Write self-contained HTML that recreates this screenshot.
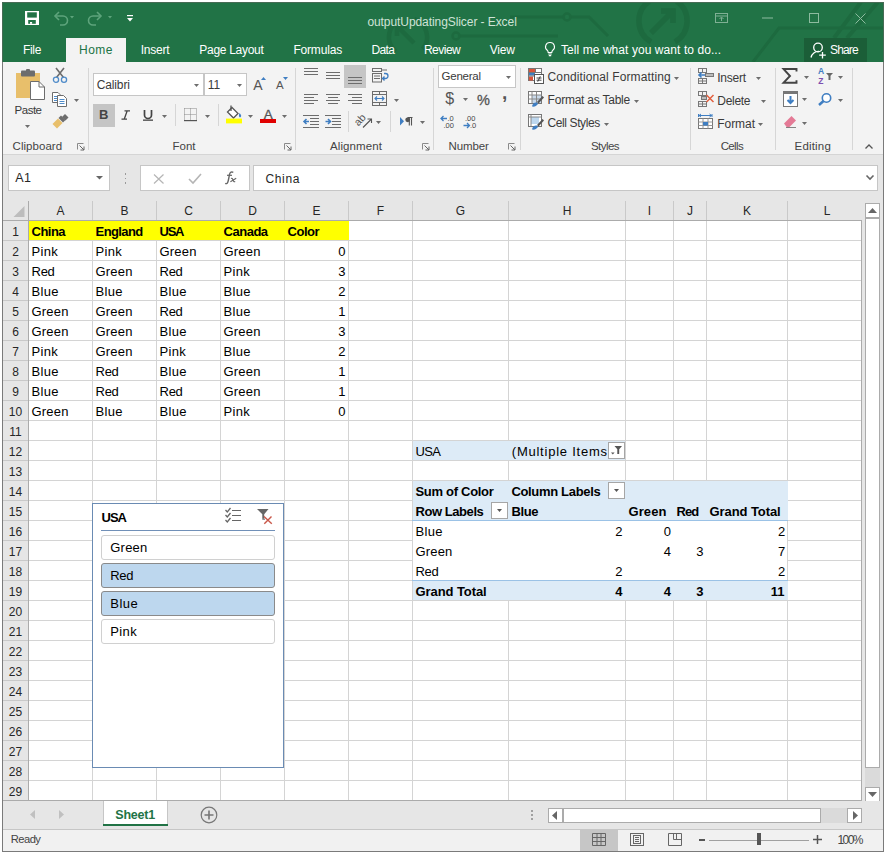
<!DOCTYPE html>
<html><head><meta charset="utf-8">
<style>
*{margin:0;padding:0;box-sizing:border-box}
html,body{width:885px;height:855px;overflow:hidden;background:#fff;font-family:"Liberation Sans",sans-serif;color:#000;position:relative}
.a{position:absolute}
.t{position:absolute;white-space:nowrap}
svg{overflow:visible}
</style></head><body>
<div class="a" style="left:2px;top:2px;width:882px;height:850px;background:#e6e6e6;border:1px solid #7a7a7a;"></div>
<div class="a" style="left:3px;top:3px;width:880px;height:59px;background:#217346;"></div>
<div class="a" style="left:2px;top:2px;width:882px;height:1px;background:#476b55;"></div>
<div class="a" style="left:2px;top:2px;width:1px;height:60px;background:#476b55;"></div>
<div class="a" style="left:883px;top:2px;width:1px;height:60px;background:#476b55;"></div>
<svg class="a" style="left:3px;top:3px;overflow:hidden;" width="880" height="59" viewBox="0 0 880 59"><g stroke="#1d6a3f" fill="none" transform="translate(-3,-3)">
<path d="M510 17 H563 M571 17 H589 L608 36" stroke-width="3"/>
<circle cx="567" cy="17" r="3.5" stroke-width="2.5"/>
<path d="M460 36 H558" stroke-width="3"/>
<circle cx="456" cy="36" r="3.5" stroke-width="2.5"/>
<path d="M395.8 51.6 A19 19 0 0 1 401.5 19.1 M414.5 19.1 A19 19 0 0 1 422.6 49.2" stroke-width="4.5"/>
<path d="M397 26 L414 43 M397 26 V36 M397 26 H407" stroke-width="4.5"/>
<path d="M651.0 41.8 A24 24 0 0 1 649.2 1.3 M676.8 1.3 A24 24 0 0 1 675.0 41.8" stroke-width="5.5"/>
<path d="M651 33 L673 11 M661 11 H673 V23" stroke-width="5.5"/>
<path d="M753 62 L779 28 H884" stroke-width="3"/>
<path d="M834 38 L861 2 M847 38 L878 2" stroke-width="4"/>
</g></svg>
<svg class="a" style="left:25px;top:11px;" width="14" height="14" viewBox="0 0 14 14"><rect x="0" y="0" width="14" height="14" fill="#fff"/><rect x="2.2" y="1.3" width="9.6" height="5.3" fill="#217346"/><rect x="3.2" y="9" width="7.6" height="3.8" fill="#217346"/><rect x="5" y="11" width="2.1" height="1.8" fill="#fff"/></svg>
<svg class="a" style="left:53px;top:10px;" width="30" height="16" viewBox="0 0 30 16"><path d="M3 6 H10 A4.5 4.5 0 0 1 10 15 H7" fill="none" stroke="#5ea47c" stroke-width="1.6"/><path d="M6 2 L2 6 L6 10" fill="none" stroke="#5ea47c" stroke-width="1.6"/><path d="M17 6 L21 6 L19 8.5 Z" fill="#5ea47c"/></svg>
<svg class="a" style="left:87px;top:10px;" width="30" height="16" viewBox="0 0 30 16"><path d="M13 6 H6 A4.5 4.5 0 0 0 6 15 H9" fill="none" stroke="#5ea47c" stroke-width="1.6"/><path d="M10 2 L14 6 L10 10" fill="none" stroke="#5ea47c" stroke-width="1.6"/><path d="M21 6 L25 6 L23 8.5 Z" fill="#5ea47c"/></svg>
<svg class="a" style="left:126px;top:14px;" width="8" height="10" viewBox="0 0 8 10"><rect x="1" y="1" width="6" height="1.2" fill="#fff"/><path d="M1 4 L7 4 L4 7.5 Z" fill="#fff"/></svg>
<div class="t" style="left:367.40px;top:16.14px;font-size:12px;line-height:12px;color:#cfe2d6;letter-spacing:-0.074px;">outputUpdatingSlicer - Excel</div>
<svg class="a" style="left:715px;top:13px;" width="13" height="10" viewBox="0 0 13 10"><rect x="0.5" y="0.5" width="12" height="9" fill="none" stroke="#7fb094"/><path d="M0.5 3 H12.5" stroke="#7fb094"/><path d="M6.5 8 V4.5 M4.5 6 L6.5 4 L8.5 6" stroke="#7fb094" fill="none"/></svg>
<svg class="a" style="left:762px;top:17px;" width="11" height="2" viewBox="0 0 11 2"><rect x="0" y="0.5" width="11" height="1" fill="#8dbb9f"/></svg>
<svg class="a" style="left:809px;top:13px;" width="10" height="10" viewBox="0 0 10 10"><rect x="0.5" y="0.5" width="9" height="9" fill="none" stroke="#8dbb9f"/></svg>
<svg class="a" style="left:855px;top:13px;" width="11" height="11" viewBox="0 0 11 11"><path d="M0.5 0.5 L10.5 10.5 M10.5 0.5 L0.5 10.5" stroke="#8dbb9f" stroke-width="1"/></svg>
<div class="a" style="left:66px;top:38px;width:60px;height:24px;background:#f3f3f3;"></div>
<div class="t" style="left:23.00px;top:44.34px;font-size:12px;line-height:12px;color:#fff;letter-spacing:-0.315px;">File</div>
<div class="t" style="left:79.00px;top:44.34px;font-size:12px;line-height:12px;color:#217346;letter-spacing:0.495px;">Home</div>
<div class="t" style="left:140.70px;top:44.34px;font-size:12px;line-height:12px;color:#fff;letter-spacing:-0.240px;">Insert</div>
<div class="t" style="left:199.30px;top:44.34px;font-size:12px;line-height:12px;color:#fff;letter-spacing:-0.296px;">Page Layout</div>
<div class="t" style="left:293.40px;top:44.34px;font-size:12px;line-height:12px;color:#fff;letter-spacing:-0.174px;">Formulas</div>
<div class="t" style="left:371.50px;top:44.34px;font-size:12px;line-height:12px;color:#fff;letter-spacing:-0.615px;">Data</div>
<div class="t" style="left:423.90px;top:44.34px;font-size:12px;line-height:12px;color:#fff;letter-spacing:-0.492px;">Review</div>
<div class="t" style="left:489.70px;top:44.34px;font-size:12px;line-height:12px;color:#fff;letter-spacing:-0.166px;">View</div>
<svg class="a" style="left:544px;top:41px;" width="12" height="16" viewBox="0 0 12 16"><path d="M6 1.5 A4.3 4.3 0 0 0 3.2 9.2 C4 10 4.2 10.8 4.2 11.5 H7.8 C7.8 10.8 8 10 8.8 9.2 A4.3 4.3 0 0 0 6 1.5 Z" fill="none" stroke="#fff" stroke-width="1.1"/><path d="M4.3 13 H7.7 M4.8 14.6 H7.2" stroke="#fff" stroke-width="1.1"/></svg>
<div class="t" style="left:561.00px;top:44.34px;font-size:12px;line-height:12px;color:#fff;letter-spacing:0.068px;">Tell me what you want to do...</div>
<div class="a" style="left:804px;top:38px;width:63px;height:24px;background:#1b5e38;"></div>
<svg class="a" style="left:810px;top:42px;" width="18" height="17" viewBox="0 0 18 17"><circle cx="8" cy="5.5" r="4.3" fill="none" stroke="#fff" stroke-width="1.3"/><path d="M1 15.5 A7.5 7.5 0 0 1 9 9.5" fill="none" stroke="#fff" stroke-width="1.3"/><path d="M12.5 10 V16.5 M9.2 13.2 H15.8" stroke="#fff" stroke-width="1.3"/></svg>
<div class="t" style="left:830.00px;top:44.34px;font-size:12px;line-height:12px;color:#fff;letter-spacing:-0.854px;">Share</div>
<div class="a" style="left:3px;top:62px;width:880px;height:92px;background:#f3f3f3;"></div>
<div class="a" style="left:3px;top:154px;width:880px;height:1px;background:#d5d5d5;"></div>
<svg class="a" style="left:15px;top:69px;" width="30" height="32" viewBox="0 0 30 32"><rect x="1" y="4" width="24" height="25" fill="#e8bf6b"/><rect x="6" y="1.5" width="14" height="6" rx="1" fill="#6d6d6d"/><rect x="11" y="0" width="4" height="3" rx="1" fill="#6d6d6d"/><path d="M15.5 12.5 H24 L29.5 18 V30.5 H15.5 Z" fill="#fff" stroke="#6d6d6d"/><path d="M24 12.5 V18 H29.5" fill="none" stroke="#6d6d6d"/></svg>
<div class="t" style="left:14.60px;top:105.06px;font-size:11.5px;line-height:11.5px;color:#3a3a3a;letter-spacing:-0.498px;">Paste</div>
<svg class="a" style="left:25px;top:125px;" width="5" height="3" viewBox="0 0 5 3"><path d="M0 0 H5 L2.5 3 Z" fill="#6d6d6d"/></svg>
<svg class="a" style="left:52px;top:67px;" width="16" height="17" viewBox="0 0 16 17"><path d="M4 1 L11.5 10.5 M12 1 L4.5 10.5" stroke="#6d6d6d" stroke-width="1.6"/><circle cx="4" cy="12.8" r="2.6" fill="none" stroke="#4f8bc9" stroke-width="1.3"/><circle cx="12" cy="12.8" r="2.6" fill="none" stroke="#4f8bc9" stroke-width="1.3"/></svg>
<svg class="a" style="left:52px;top:92px;" width="16" height="15" viewBox="0 0 16 15"><path d="M0.5 0.5 H6 L8 2.5 V10.5 H0.5 Z" fill="#fff" stroke="#6d6d6d"/><path d="M2 4.5 H5 M2 6.5 H5 M2 8.5 H5" stroke="#4f8bc9" stroke-width="1"/><path d="M5.5 3.5 H11.5 L14.5 6.5 V14.5 H5.5 Z" fill="#fff" stroke="#6d6d6d"/><path d="M7.5 7.5 H12.5 M7.5 9.5 H12.5 M7.5 11.5 H12.5" stroke="#4f8bc9" stroke-width="1"/></svg>
<svg class="a" style="left:74px;top:98.5px;" width="5" height="3" viewBox="0 0 5 3"><path d="M0 0 H5 L2.5 3 Z" fill="#6d6d6d"/></svg>
<svg class="a" style="left:52px;top:114px;" width="17" height="15" viewBox="0 0 17 15"><path d="M0.5 10 L6 4.5 L10.5 9 L5 14.5 Z" fill="#e8bf6b"/><path d="M6.5 4 L9 1.5 L13.5 6 L11 8.5 Z" fill="#6d6d6d"/><path d="M10 3 L13 0 L16.5 3.5 L13.5 6.5 Z" fill="#6d6d6d"/></svg>
<div class="t" style="left:12.60px;top:141.26px;font-size:11.5px;line-height:11.5px;color:#444;letter-spacing:0.035px;">Clipboard</div>
<svg class="a" style="left:77px;top:143px;" width="8" height="8" viewBox="0 0 8 8"><path d="M0.5 6.5 V0.5 H6.5" fill="none" stroke="#8a8a8a"/><path d="M2.5 2.5 L7 7 M7 3.5 V7 H3.5" fill="none" stroke="#666"/></svg>
<div class="a" style="left:88px;top:68px;width:1px;height:82px;background:#d6d6d6;"></div>
<div class="a" style="left:93px;top:73px;width:111px;height:23px;background:#fff;border:1px solid #c6c6c6;"></div>
<div class="t" style="left:96.70px;top:78.84px;font-size:12px;line-height:12px;color:#3a3a3a;letter-spacing:-0.122px;">Calibri</div>
<svg class="a" style="left:194px;top:84px;" width="5" height="3" viewBox="0 0 5 3"><path d="M0 0 H5 L2.5 3 Z" fill="#6d6d6d"/></svg>
<div class="a" style="left:204px;top:73px;width:43px;height:23px;background:#fff;border:1px solid #c6c6c6;"></div>
<div class="t" style="left:207.70px;top:78.84px;font-size:12px;line-height:12px;color:#3a3a3a;">11</div>
<svg class="a" style="left:237px;top:84px;" width="5" height="3" viewBox="0 0 5 3"><path d="M0 0 H5 L2.5 3 Z" fill="#6d6d6d"/></svg>
<div class="t" style="left:253.20px;top:78.15px;font-size:14px;line-height:14px;color:#555;">A</div>
<svg class="a" style="left:261px;top:76.5px;" width="5" height="3" viewBox="0 0 5 3"><path d="M0 3 H5 L2.5 0 Z" fill="#3f7ec2"/></svg>
<div class="t" style="left:276.00px;top:80.26px;font-size:11.5px;line-height:11.5px;color:#555;">A</div>
<svg class="a" style="left:283px;top:76.5px;" width="5" height="3" viewBox="0 0 5 3"><path d="M0 0 H5 L2.5 3 Z" fill="#3f7ec2"/></svg>
<div class="a" style="left:93px;top:104px;width:22px;height:23px;background:#c5c5c5;"></div>
<div class="t" style="left:99.10px;top:108.19px;font-size:13px;line-height:13px;color:#444;font-weight:bold;">B</div>
<svg class="a" style="left:121px;top:110px;" width="9" height="10" viewBox="0 0 9 10"><path d="M3.5 0.8 H9 M0.5 9.2 H6 M6.2 0.8 L3.2 9.2" fill="none" stroke="#444" stroke-width="1.3"/></svg>
<svg class="a" style="left:143px;top:110px;" width="10" height="11" viewBox="0 0 10 11"><path d="M1.5 0 V5 A3.5 3.5 0 0 0 8.5 5 V0" fill="none" stroke="#444" stroke-width="1.7"/><rect x="0" y="9.5" width="10" height="1.3" fill="#444"/></svg>
<svg class="a" style="left:162px;top:114.5px;" width="5" height="3" viewBox="0 0 5 3"><path d="M0 0 H5 L2.5 3 Z" fill="#6d6d6d"/></svg>
<div class="a" style="left:175px;top:104px;width:1px;height:22px;background:#d6d6d6;"></div>
<svg class="a" style="left:184px;top:108px;" width="13" height="13" viewBox="0 0 13 13"><path d="M0.5 0.5 H12.5 V12.5 M0.5 0.5 V12.5 M6.5 0.5 V12.5 M0.5 6.5 H12.5" fill="none" stroke="#888" stroke-dasharray="1 1"/><rect x="0" y="12" width="13" height="1.2" fill="#555"/></svg>
<svg class="a" style="left:205px;top:114.5px;" width="5" height="3" viewBox="0 0 5 3"><path d="M0 0 H5 L2.5 3 Z" fill="#6d6d6d"/></svg>
<div class="a" style="left:218px;top:104px;width:1px;height:22px;background:#d6d6d6;"></div>
<svg class="a" style="left:225px;top:105px;" width="19" height="19" viewBox="0 0 19 19"><path d="M7 2.5 L13 8.5 L8.5 13 L2.5 7 Z" fill="#fff" stroke="#555" stroke-width="1.3"/><path d="M6 0.5 V6" stroke="#555" stroke-width="1.3"/><path d="M14.5 8 C16.5 10 16.8 11.5 15 12.5 C13.5 11.5 13.8 10 14.5 8 Z" fill="#3f7ec2"/><rect x="1" y="13.6" width="16" height="4.8" fill="#ffff00"/></svg>
<svg class="a" style="left:248px;top:114.5px;" width="5" height="3" viewBox="0 0 5 3"><path d="M0 0 H5 L2.5 3 Z" fill="#6d6d6d"/></svg>
<div class="t" style="left:263.70px;top:107.57px;font-size:13.5px;line-height:13.5px;color:#555;-webkit-text-stroke:0.3px #555;">A</div>
<div class="a" style="left:260px;top:119px;width:16px;height:4px;background:#e00000;"></div>
<svg class="a" style="left:282px;top:114.5px;" width="5" height="3" viewBox="0 0 5 3"><path d="M0 0 H5 L2.5 3 Z" fill="#6d6d6d"/></svg>
<div class="t" style="left:172.50px;top:141.26px;font-size:11.5px;line-height:11.5px;color:#444;">Font</div>
<svg class="a" style="left:284px;top:143px;" width="8" height="8" viewBox="0 0 8 8"><path d="M0.5 6.5 V0.5 H6.5" fill="none" stroke="#8a8a8a"/><path d="M2.5 2.5 L7 7 M7 3.5 V7 H3.5" fill="none" stroke="#666"/></svg>
<div class="a" style="left:295px;top:68px;width:1px;height:82px;background:#d6d6d6;"></div>
<div class="a" style="left:304px;top:68px;width:14px;height:1px;background:#6d6d6d;"></div>
<div class="a" style="left:304px;top:71px;width:14px;height:1px;background:#6d6d6d;"></div>
<div class="a" style="left:304px;top:74px;width:14px;height:1px;background:#6d6d6d;"></div>
<div class="a" style="left:326px;top:72px;width:14px;height:1px;background:#6d6d6d;"></div>
<div class="a" style="left:326px;top:75px;width:14px;height:1px;background:#6d6d6d;"></div>
<div class="a" style="left:326px;top:78px;width:14px;height:1px;background:#6d6d6d;"></div>
<div class="a" style="left:344px;top:65px;width:22px;height:23px;background:#c5c5c5;"></div>
<div class="a" style="left:348px;top:77px;width:14px;height:1px;background:#6d6d6d;"></div>
<div class="a" style="left:348px;top:80px;width:14px;height:1px;background:#6d6d6d;"></div>
<div class="a" style="left:348px;top:83px;width:14px;height:1px;background:#6d6d6d;"></div>
<svg class="a" style="left:372px;top:68px;" width="17" height="15" viewBox="0 0 17 15"><rect x="0.5" y="0.5" width="9" height="3" fill="none" stroke="#6d6d6d"/><path d="M9.5 2 H15" stroke="#6d6d6d"/><rect x="0.5" y="5.5" width="9" height="8.5" fill="none" stroke="#6d6d6d"/><path d="M2 8 H8 M2 10.5 H8" stroke="#6d6d6d"/><path d="M11 10.5 H13.5 A2.5 2.5 0 0 0 13.5 5.5 H12 M12.5 8.5 L10.5 10.5 L12.5 12.5" fill="none" stroke="#3f7ec2" stroke-width="1.3"/></svg>
<div class="a" style="left:304px;top:94px;width:14px;height:1px;background:#6d6d6d;"></div>
<div class="a" style="left:304px;top:97px;width:10px;height:1px;background:#6d6d6d;"></div>
<div class="a" style="left:304px;top:100px;width:14px;height:1px;background:#6d6d6d;"></div>
<div class="a" style="left:304px;top:103px;width:10px;height:1px;background:#6d6d6d;"></div>
<div class="a" style="left:326px;top:94px;width:14px;height:1px;background:#6d6d6d;"></div>
<div class="a" style="left:328px;top:97px;width:10px;height:1px;background:#6d6d6d;"></div>
<div class="a" style="left:326px;top:100px;width:14px;height:1px;background:#6d6d6d;"></div>
<div class="a" style="left:328px;top:103px;width:10px;height:1px;background:#6d6d6d;"></div>
<div class="a" style="left:348px;top:94px;width:14px;height:1px;background:#6d6d6d;"></div>
<div class="a" style="left:352px;top:97px;width:10px;height:1px;background:#6d6d6d;"></div>
<div class="a" style="left:348px;top:100px;width:14px;height:1px;background:#6d6d6d;"></div>
<div class="a" style="left:352px;top:103px;width:10px;height:1px;background:#6d6d6d;"></div>
<svg class="a" style="left:372px;top:91px;" width="16" height="15" viewBox="0 0 16 15"><rect x="0.5" y="0.5" width="14" height="14" fill="none" stroke="#6d6d6d"/><path d="M0.5 3.5 H14.5 M0.5 11.5 H14.5 M7.5 0.5 V3.5 M7.5 11.5 V14.5" stroke="#6d6d6d"/><path d="M3 7.5 H12 M5 5.5 L3 7.5 L5 9.5 M10 5.5 L12 7.5 L10 9.5" fill="none" stroke="#3f7ec2" stroke-width="1.1"/></svg>
<svg class="a" style="left:394px;top:99px;" width="5" height="3" viewBox="0 0 5 3"><path d="M0 0 H5 L2.5 3 Z" fill="#6d6d6d"/></svg>
<svg class="a" style="left:303px;top:115px;" width="17" height="13" viewBox="0 0 17 13"><path d="M0 0.5 H16 M7 3.5 H16 M7 6.5 H16 M7 9.5 H16 M0 12.5 H16" stroke="#6d6d6d"/><path d="M1 6.5 H6 M3.5 4 L1 6.5 L3.5 9" fill="none" stroke="#3f7ec2" stroke-width="1.6"/></svg>
<svg class="a" style="left:325px;top:115px;" width="17" height="13" viewBox="0 0 17 13"><path d="M0 0.5 H16 M7 3.5 H16 M7 6.5 H16 M7 9.5 H16 M0 12.5 H16" stroke="#6d6d6d"/><path d="M0.5 6.5 H5.5 M3 4 L5.5 6.5 L3 9" fill="none" stroke="#3f7ec2" stroke-width="1.6"/></svg>
<div class="a" style="left:348px;top:111px;width:1px;height:21px;background:#d6d6d6;"></div>
<svg class="a" style="left:350px;top:108px;" width="25" height="25" viewBox="0 0 25 25"><text x="0" y="0" font-size="10.5" font-family="Liberation Sans" fill="#555" transform="translate(8.5,18.5) rotate(-48)">ab</text><path d="M13 19.5 L21.5 11 M17.5 11 H21.5 V15" fill="none" stroke="#555" stroke-width="1.1"/></svg>
<svg class="a" style="left:376px;top:121px;" width="5" height="3" viewBox="0 0 5 3"><path d="M0 0 H5 L2.5 3 Z" fill="#6d6d6d"/></svg>
<div class="a" style="left:390px;top:111px;width:1px;height:21px;background:#d6d6d6;"></div>
<svg class="a" style="left:400px;top:117px;" width="13" height="9" viewBox="0 0 13 9"><path d="M0 0 L4 4.2 L0 8.4 Z" fill="#3f7ec2"/><path d="M7.5 0.5 H12.5 M9.3 0.5 V8.5 M11.5 0.5 V8.5" stroke="#555" stroke-width="1.1"/><circle cx="7.7" cy="2.8" r="2.4" fill="#555"/></svg>
<svg class="a" style="left:420px;top:121px;" width="5" height="3" viewBox="0 0 5 3"><path d="M0 0 H5 L2.5 3 Z" fill="#6d6d6d"/></svg>
<div class="t" style="left:330.00px;top:141.26px;font-size:11.5px;line-height:11.5px;color:#444;letter-spacing:0.109px;">Alignment</div>
<svg class="a" style="left:422px;top:143px;" width="8" height="8" viewBox="0 0 8 8"><path d="M0.5 6.5 V0.5 H6.5" fill="none" stroke="#8a8a8a"/><path d="M2.5 2.5 L7 7 M7 3.5 V7 H3.5" fill="none" stroke="#666"/></svg>
<div class="a" style="left:433px;top:68px;width:1px;height:82px;background:#d6d6d6;"></div>
<div class="a" style="left:438px;top:65px;width:78px;height:23px;background:#fff;border:1px solid #c6c6c6;"></div>
<div class="t" style="left:441.50px;top:71.26px;font-size:11.5px;line-height:11.5px;color:#3a3a3a;letter-spacing:-0.232px;">General</div>
<svg class="a" style="left:506px;top:75.5px;" width="5" height="3" viewBox="0 0 5 3"><path d="M0 0 H5 L2.5 3 Z" fill="#6d6d6d"/></svg>
<div class="t" style="left:445.35px;top:90.95px;font-size:16px;line-height:16px;color:#555;font-family:"Liberation Serif",serif;">$</div>
<svg class="a" style="left:463px;top:98px;" width="5" height="3" viewBox="0 0 5 3"><path d="M0 0 H5 L2.5 3 Z" fill="#6d6d6d"/></svg>
<div class="t" style="left:476.95px;top:93.32px;font-size:14.5px;line-height:14.5px;color:#555;-webkit-text-stroke:0.3px #555;">%</div>
<div class="t" style="left:501.96px;top:83.41px;font-size:19px;line-height:19px;color:#555;font-weight:bold;">,</div>
<svg class="a" style="left:440px;top:114px;" width="17" height="15" viewBox="0 0 17 15"><path d="M1 4.5 H7 M3.5 2 L1 4.5 L3.5 7" fill="none" stroke="#3f7ec2" stroke-width="1.3"/><text x="7.5" y="7" font-size="7.5" font-family="Liberation Sans" fill="#444">.0</text><text x="3.5" y="14" font-size="7.5" font-family="Liberation Sans" fill="#444">.00</text></svg>
<svg class="a" style="left:463px;top:114px;" width="15" height="15" viewBox="0 0 15 15"><text x="2" y="7" font-size="7.5" font-family="Liberation Sans" fill="#444">.00</text><path d="M0.5 11.5 H6.5 M4 9 L6.5 11.5 L4 14" fill="none" stroke="#3f7ec2" stroke-width="1.3"/><text x="7" y="14" font-size="7.5" font-family="Liberation Sans" fill="#444">.0</text></svg>
<div class="t" style="left:448.50px;top:141.26px;font-size:11.5px;line-height:11.5px;color:#444;letter-spacing:-0.118px;">Number</div>
<svg class="a" style="left:508px;top:143px;" width="8" height="8" viewBox="0 0 8 8"><path d="M0.5 6.5 V0.5 H6.5" fill="none" stroke="#8a8a8a"/><path d="M2.5 2.5 L7 7 M7 3.5 V7 H3.5" fill="none" stroke="#666"/></svg>
<div class="a" style="left:520px;top:68px;width:1px;height:82px;background:#d6d6d6;"></div>
<svg class="a" style="left:528px;top:68px;" width="16" height="16" viewBox="0 0 16 16"><rect x="0.5" y="0.5" width="13" height="12" fill="#fff" stroke="#777"/><rect x="1" y="1" width="6" height="3" fill="#d9553b"/><rect x="1" y="4.5" width="6" height="3" fill="#3f7ec2"/><rect x="1" y="8.5" width="4" height="4" fill="#d9553b"/><path d="M7.5 0.5 V4.5 M0.5 4.5 H13.5 M0.5 8 H7" stroke="#777"/><rect x="6.5" y="6.5" width="9" height="9" fill="#fff" stroke="#555"/><path d="M8.5 10 H13.5 M8.5 12.2 H13.5 M12.3 8.3 L9.7 13.7" stroke="#333" stroke-width="0.9"/></svg>
<div class="t" style="left:547.60px;top:71.34px;font-size:12px;line-height:12px;color:#3a3a3a;letter-spacing:0.109px;">Conditional Formatting</div>
<svg class="a" style="left:674px;top:76.5px;" width="5" height="3" viewBox="0 0 5 3"><path d="M0 0 H5 L2.5 3 Z" fill="#6d6d6d"/></svg>
<svg class="a" style="left:528px;top:91px;" width="16" height="16" viewBox="0 0 16 16"><rect x="0.5" y="0.5" width="13" height="12" fill="#fff" stroke="#777"/><rect x="4" y="4" width="9" height="8" fill="#c9d9ea"/><path d="M0.5 4 H13.5 M0.5 8 H13.5 M4 0.5 V12.5 M8.5 0.5 V12.5" stroke="#888"/><path d="M9 11 L14.5 5 L16 6.5 L10.5 12.5 Z" fill="#555"/><path d="M4 15.5 C4.5 12.5 6.5 11 9 11.5 L10 13 C8.5 15 6.5 16 4 15.5 Z" fill="#3f7ec2"/></svg>
<div class="t" style="left:547.60px;top:93.84px;font-size:12px;line-height:12px;color:#3a3a3a;letter-spacing:-0.228px;">Format as Table</div>
<svg class="a" style="left:633.5px;top:99.5px;" width="5" height="3" viewBox="0 0 5 3"><path d="M0 0 H5 L2.5 3 Z" fill="#6d6d6d"/></svg>
<svg class="a" style="left:528px;top:114px;" width="16" height="16" viewBox="0 0 16 16"><rect x="0.5" y="0.5" width="13" height="12" fill="#fff" stroke="#777"/><rect x="3" y="3" width="8" height="7" fill="#bdd7ee"/><path d="M0.5 3 H13.5 M3 0.5 V12.5" stroke="#888"/><path d="M9 11 L14.5 5 L16 6.5 L10.5 12.5 Z" fill="#555"/><path d="M4 15.5 C4.5 12.5 6.5 11 9 11.5 L10 13 C8.5 15 6.5 16 4 15.5 Z" fill="#3f7ec2"/></svg>
<div class="t" style="left:547.60px;top:116.84px;font-size:12px;line-height:12px;color:#3a3a3a;letter-spacing:-0.409px;">Cell Styles</div>
<svg class="a" style="left:603.5px;top:122.5px;" width="5" height="3" viewBox="0 0 5 3"><path d="M0 0 H5 L2.5 3 Z" fill="#6d6d6d"/></svg>
<div class="t" style="left:591.00px;top:141.26px;font-size:11.5px;line-height:11.5px;color:#444;letter-spacing:-0.562px;">Styles</div>
<div class="a" style="left:690px;top:68px;width:1px;height:82px;background:#d6d6d6;"></div>
<svg class="a" style="left:698px;top:68px;" width="17" height="16" viewBox="0 0 17 16"><rect x="0.5" y="0.5" width="8" height="4" fill="none" stroke="#777"/><path d="M4.5 0.5 V4.5" stroke="#777"/><rect x="0.5" y="10.5" width="8" height="5" fill="none" stroke="#777"/><path d="M0.5 13 H8.5 M4.5 10.5 V15.5" stroke="#777"/><rect x="7.5" y="5.5" width="8" height="3" fill="#bbb" stroke="#777"/><path d="M1 7 H7 M3.5 4.5 L1 7 L3.5 9.5" fill="none" stroke="#3f7ec2" stroke-width="1.6"/></svg>
<div class="t" style="left:717.30px;top:71.84px;font-size:12px;line-height:12px;color:#3a3a3a;letter-spacing:-0.260px;">Insert</div>
<svg class="a" style="left:756px;top:76.5px;" width="5" height="3" viewBox="0 0 5 3"><path d="M0 0 H5 L2.5 3 Z" fill="#6d6d6d"/></svg>
<svg class="a" style="left:698px;top:91px;" width="17" height="16" viewBox="0 0 17 16"><rect x="0.5" y="0.5" width="8" height="4" fill="none" stroke="#777"/><path d="M4.5 0.5 V4.5" stroke="#777"/><rect x="0.5" y="10.5" width="8" height="5" fill="none" stroke="#777"/><path d="M0.5 13 H8.5 M4.5 10.5 V15.5" stroke="#777"/><rect x="3.5" y="5.5" width="5" height="3" fill="#bbb" stroke="#777"/><path d="M8.5 4 L15.5 11 M15.5 4 L8.5 11" stroke="#e2603f" stroke-width="1.5"/></svg>
<div class="t" style="left:717.30px;top:94.84px;font-size:12px;line-height:12px;color:#3a3a3a;letter-spacing:-0.297px;">Delete</div>
<svg class="a" style="left:760.5px;top:99.5px;" width="5" height="3" viewBox="0 0 5 3"><path d="M0 0 H5 L2.5 3 Z" fill="#6d6d6d"/></svg>
<svg class="a" style="left:698px;top:114px;" width="15" height="16" viewBox="0 0 15 16"><path d="M0.5 0 V3 M14 0 V3 M1 1.5 H13.5 M3 0 L1 1.5 L3 3 M11.5 0 L13.5 1.5 L11.5 3" fill="none" stroke="#3f7ec2"/><rect x="0.5" y="4.5" width="14" height="10" fill="#fff" stroke="#777"/><path d="M0.5 8 H14.5 M0.5 11.5 H14.5 M5 4.5 V14.5 M10 4.5 V14.5" stroke="#999"/><rect x="5" y="8" width="5" height="3.5" fill="#3f7ec2"/></svg>
<div class="t" style="left:717.30px;top:117.84px;font-size:12px;line-height:12px;color:#3a3a3a;letter-spacing:-0.060px;">Format</div>
<svg class="a" style="left:758px;top:122.5px;" width="5" height="3" viewBox="0 0 5 3"><path d="M0 0 H5 L2.5 3 Z" fill="#6d6d6d"/></svg>
<div class="t" style="left:720.70px;top:141.26px;font-size:11.5px;line-height:11.5px;color:#444;letter-spacing:-0.645px;">Cells</div>
<div class="a" style="left:775px;top:68px;width:1px;height:82px;background:#d6d6d6;"></div>
<svg class="a" style="left:782px;top:68px;" width="16" height="16" viewBox="0 0 16 16"><path d="M14.5 3.5 V1 H1.5 L8 8 L1.5 14.8 H14.5 V12.3" fill="none" stroke="#444" stroke-width="1.9" stroke-linejoin="miter"/></svg>
<svg class="a" style="left:804px;top:75.5px;" width="5" height="3" viewBox="0 0 5 3"><path d="M0 0 H5 L2.5 3 Z" fill="#6d6d6d"/></svg>
<div class="t" style="left:818.00px;top:67.40px;font-size:8.5px;line-height:8.5px;color:#3f7ec2;font-weight:bold;">A</div>
<div class="t" style="left:818.20px;top:76.50px;font-size:8.5px;line-height:8.5px;color:#7d4fb0;font-weight:bold;">Z</div>
<svg class="a" style="left:826px;top:73px;" width="7" height="7" viewBox="0 0 7 7"><path d="M0 0 H7 L4.5 2.8 V7 H2.5 V2.8 Z" fill="#666"/></svg>
<svg class="a" style="left:837.5px;top:75.5px;" width="5" height="3" viewBox="0 0 5 3"><path d="M0 0 H5 L2.5 3 Z" fill="#6d6d6d"/></svg>
<svg class="a" style="left:783px;top:91px;" width="15" height="16" viewBox="0 0 15 16"><rect x="0.5" y="0.5" width="14" height="15" fill="#fff" stroke="#777"/><rect x="0" y="0" width="15" height="3" fill="#777"/><path d="M7.5 5 V12 M4.5 9 L7.5 12 L10.5 9" fill="none" stroke="#3f7ec2" stroke-width="2"/></svg>
<svg class="a" style="left:802px;top:98px;" width="5" height="3" viewBox="0 0 5 3"><path d="M0 0 H5 L2.5 3 Z" fill="#6d6d6d"/></svg>
<svg class="a" style="left:818px;top:93px;" width="14" height="13" viewBox="0 0 14 13"><circle cx="8.5" cy="5" r="4.2" fill="#fff" stroke="#3f7ec2" stroke-width="1.6"/><path d="M5.5 8 L1 12" stroke="#3f7ec2" stroke-width="2.4"/></svg>
<svg class="a" style="left:837.5px;top:98.5px;" width="5" height="3" viewBox="0 0 5 3"><path d="M0 0 H5 L2.5 3 Z" fill="#6d6d6d"/></svg>
<svg class="a" style="left:783px;top:115px;" width="14" height="13" viewBox="0 0 14 13"><path d="M1 8.5 L8.5 1 L13 5.5 L6 12.5 H4 Z" fill="#e47a96"/><path d="M3 12.5 H13" stroke="#777" stroke-width="0.9"/></svg>
<svg class="a" style="left:802px;top:121.5px;" width="5" height="3" viewBox="0 0 5 3"><path d="M0 0 H5 L2.5 3 Z" fill="#6d6d6d"/></svg>
<div class="t" style="left:794.60px;top:141.26px;font-size:11.5px;line-height:11.5px;color:#444;letter-spacing:0.174px;">Editing</div>
<div class="a" style="left:852px;top:68px;width:1px;height:82px;background:#d6d6d6;"></div>
<svg class="a" style="left:865px;top:144px;" width="8" height="5" viewBox="0 0 8 5"><path d="M0.5 4.5 L4 1 L7.5 4.5" fill="none" stroke="#555" stroke-width="1.3"/></svg>
<div class="a" style="left:3px;top:155px;width:880px;height:46px;background:#e6e6e6;"></div>
<div class="a" style="left:8px;top:165px;width:102px;height:26px;background:#fff;border:1px solid #c6c6c6;"></div>
<div class="t" style="left:15.30px;top:172.12px;font-size:12.5px;line-height:12.5px;color:#262626;letter-spacing:0.303px;">A1</div>
<svg class="a" style="left:96px;top:175.5px;" width="7" height="4" viewBox="0 0 7 4"><path d="M0 0 H7 L3.5 3.5 Z" fill="#666"/></svg>
<div class="a" style="left:124.5px;top:173px;width:1.5px;height:1.5px;background:#9a9a9a;"></div>
<div class="a" style="left:124.5px;top:177.5px;width:1.5px;height:1.5px;background:#9a9a9a;"></div>
<div class="a" style="left:124.5px;top:182px;width:1.5px;height:1.5px;background:#9a9a9a;"></div>
<div class="a" style="left:140px;top:165px;width:110px;height:26px;background:#fff;border:1px solid #c6c6c6;"></div>
<svg class="a" style="left:153px;top:174px;" width="12" height="10" viewBox="0 0 12 10"><path d="M1 0.5 L10.5 9.5 M10.5 0.5 L1 9.5" stroke="#b5b5b5" stroke-width="1.2"/></svg>
<svg class="a" style="left:188px;top:173px;" width="14" height="11" viewBox="0 0 14 11"><path d="M1 6 L5 10 L13 1" fill="none" stroke="#b5b5b5" stroke-width="1.6"/></svg>
<svg class="a" style="left:224px;top:171px;" width="14" height="14" viewBox="0 0 14 14"><path d="M1.2 12.3 C2.8 13.2 3.8 12 4.3 9.5 L5.6 3.2 C6.1 1.2 7.6 0.6 9.3 1.3" fill="none" stroke="#666" stroke-width="1.4"/><path d="M3 4.3 H8" stroke="#666" stroke-width="1.2"/><path d="M7 7.5 C8 7 8.5 7.5 9 9 C9.5 10.5 10 11 11.2 10.5 M12.2 7.2 L6.4 10.8" fill="none" stroke="#666" stroke-width="1.1"/></svg>
<div class="a" style="left:253px;top:165px;width:625px;height:26px;background:#fff;border:1px solid #c6c6c6;"></div>
<div class="t" style="left:265.40px;top:172.84px;font-size:12px;line-height:12px;color:#262626;letter-spacing:0.660px;">China</div>
<svg class="a" style="left:866px;top:175px;" width="8" height="5" viewBox="0 0 8 5"><path d="M0.5 0.5 L4 4 L7.5 0.5" fill="none" stroke="#666" stroke-width="1.6"/></svg>
<div class="a" style="left:3px;top:201px;width:880px;height:600px;background:#e6e6e6;"></div>
<div class="a" style="left:3px;top:201px;width:858px;height:20px;background:#e6e6e6;"></div>
<div class="a" style="left:3px;top:221px;width:25px;height:580px;background:#e6e6e6;"></div>
<svg class="a" style="left:13px;top:206px;" width="12" height="11" viewBox="0 0 12 11"><path d="M11.5 0 V11 H0.5 Z" fill="#bdbdbd"/></svg>
<div class="a" style="left:29px;top:221px;width:832px;height:580px;background:#fff;"></div>
<div class="t" style="left:56.50px;top:205.04px;font-size:12px;line-height:12px;color:#262626;">A</div>
<div class="a" style="left:92px;top:201px;width:1px;height:20px;background:#c9c9c9;"></div>
<div class="t" style="left:120.50px;top:205.04px;font-size:12px;line-height:12px;color:#262626;">B</div>
<div class="a" style="left:156px;top:201px;width:1px;height:20px;background:#c9c9c9;"></div>
<div class="t" style="left:184.16px;top:205.04px;font-size:12px;line-height:12px;color:#262626;">C</div>
<div class="a" style="left:220px;top:201px;width:1px;height:20px;background:#c9c9c9;"></div>
<div class="t" style="left:248.16px;top:205.04px;font-size:12px;line-height:12px;color:#262626;">D</div>
<div class="a" style="left:284px;top:201px;width:1px;height:20px;background:#c9c9c9;"></div>
<div class="t" style="left:312.50px;top:205.04px;font-size:12px;line-height:12px;color:#262626;">E</div>
<div class="a" style="left:348px;top:201px;width:1px;height:20px;background:#c9c9c9;"></div>
<div class="t" style="left:376.84px;top:205.04px;font-size:12px;line-height:12px;color:#262626;">F</div>
<div class="a" style="left:412px;top:201px;width:1px;height:20px;background:#c9c9c9;"></div>
<div class="t" style="left:455.84px;top:205.04px;font-size:12px;line-height:12px;color:#262626;">G</div>
<div class="a" style="left:508px;top:201px;width:1px;height:20px;background:#c9c9c9;"></div>
<div class="t" style="left:562.66px;top:205.04px;font-size:12px;line-height:12px;color:#262626;">H</div>
<div class="a" style="left:625px;top:201px;width:1px;height:20px;background:#c9c9c9;"></div>
<div class="t" style="left:647.84px;top:205.04px;font-size:12px;line-height:12px;color:#262626;">I</div>
<div class="a" style="left:673px;top:201px;width:1px;height:20px;background:#c9c9c9;"></div>
<div class="t" style="left:687.00px;top:205.04px;font-size:12px;line-height:12px;color:#262626;">J</div>
<div class="a" style="left:706px;top:201px;width:1px;height:20px;background:#c9c9c9;"></div>
<div class="t" style="left:743.00px;top:205.04px;font-size:12px;line-height:12px;color:#262626;">K</div>
<div class="a" style="left:787px;top:201px;width:1px;height:20px;background:#c9c9c9;"></div>
<div class="t" style="left:823.66px;top:205.04px;font-size:12px;line-height:12px;color:#262626;">L</div>
<div class="a" style="left:28px;top:201px;width:1px;height:600px;background:#ababab;"></div>
<div class="a" style="left:3px;top:220px;width:858px;height:1px;background:#ababab;"></div>
<div class="a" style="left:3px;top:240px;width:25px;height:1px;background:#c9c9c9;"></div>
<div class="t" style="left:12.16px;top:225.84px;font-size:12px;line-height:12px;color:#262626;">1</div>
<div class="a" style="left:3px;top:260px;width:25px;height:1px;background:#c9c9c9;"></div>
<div class="t" style="left:12.16px;top:245.84px;font-size:12px;line-height:12px;color:#262626;">2</div>
<div class="a" style="left:3px;top:280px;width:25px;height:1px;background:#c9c9c9;"></div>
<div class="t" style="left:12.16px;top:265.84px;font-size:12px;line-height:12px;color:#262626;">3</div>
<div class="a" style="left:3px;top:300px;width:25px;height:1px;background:#c9c9c9;"></div>
<div class="t" style="left:12.16px;top:285.84px;font-size:12px;line-height:12px;color:#262626;">4</div>
<div class="a" style="left:3px;top:320px;width:25px;height:1px;background:#c9c9c9;"></div>
<div class="t" style="left:12.16px;top:305.84px;font-size:12px;line-height:12px;color:#262626;">5</div>
<div class="a" style="left:3px;top:340px;width:25px;height:1px;background:#c9c9c9;"></div>
<div class="t" style="left:12.16px;top:325.84px;font-size:12px;line-height:12px;color:#262626;">6</div>
<div class="a" style="left:3px;top:360px;width:25px;height:1px;background:#c9c9c9;"></div>
<div class="t" style="left:12.16px;top:345.84px;font-size:12px;line-height:12px;color:#262626;">7</div>
<div class="a" style="left:3px;top:380px;width:25px;height:1px;background:#c9c9c9;"></div>
<div class="t" style="left:12.16px;top:365.84px;font-size:12px;line-height:12px;color:#262626;">8</div>
<div class="a" style="left:3px;top:400px;width:25px;height:1px;background:#c9c9c9;"></div>
<div class="t" style="left:12.16px;top:385.84px;font-size:12px;line-height:12px;color:#262626;">9</div>
<div class="a" style="left:3px;top:420px;width:25px;height:1px;background:#c9c9c9;"></div>
<div class="t" style="left:8.83px;top:405.84px;font-size:12px;line-height:12px;color:#262626;">10</div>
<div class="a" style="left:3px;top:440px;width:25px;height:1px;background:#c9c9c9;"></div>
<div class="t" style="left:9.27px;top:425.84px;font-size:12px;line-height:12px;color:#262626;">11</div>
<div class="a" style="left:3px;top:460px;width:25px;height:1px;background:#c9c9c9;"></div>
<div class="t" style="left:8.83px;top:445.84px;font-size:12px;line-height:12px;color:#262626;">12</div>
<div class="a" style="left:3px;top:480px;width:25px;height:1px;background:#c9c9c9;"></div>
<div class="t" style="left:8.83px;top:465.84px;font-size:12px;line-height:12px;color:#262626;">13</div>
<div class="a" style="left:3px;top:500px;width:25px;height:1px;background:#c9c9c9;"></div>
<div class="t" style="left:8.83px;top:485.84px;font-size:12px;line-height:12px;color:#262626;">14</div>
<div class="a" style="left:3px;top:520px;width:25px;height:1px;background:#c9c9c9;"></div>
<div class="t" style="left:8.83px;top:505.84px;font-size:12px;line-height:12px;color:#262626;">15</div>
<div class="a" style="left:3px;top:540px;width:25px;height:1px;background:#c9c9c9;"></div>
<div class="t" style="left:8.83px;top:525.84px;font-size:12px;line-height:12px;color:#262626;">16</div>
<div class="a" style="left:3px;top:560px;width:25px;height:1px;background:#c9c9c9;"></div>
<div class="t" style="left:8.83px;top:545.84px;font-size:12px;line-height:12px;color:#262626;">17</div>
<div class="a" style="left:3px;top:580px;width:25px;height:1px;background:#c9c9c9;"></div>
<div class="t" style="left:8.83px;top:565.84px;font-size:12px;line-height:12px;color:#262626;">18</div>
<div class="a" style="left:3px;top:600px;width:25px;height:1px;background:#c9c9c9;"></div>
<div class="t" style="left:8.83px;top:585.84px;font-size:12px;line-height:12px;color:#262626;">19</div>
<div class="a" style="left:3px;top:620px;width:25px;height:1px;background:#c9c9c9;"></div>
<div class="t" style="left:8.83px;top:605.84px;font-size:12px;line-height:12px;color:#262626;">20</div>
<div class="a" style="left:3px;top:640px;width:25px;height:1px;background:#c9c9c9;"></div>
<div class="t" style="left:8.83px;top:625.84px;font-size:12px;line-height:12px;color:#262626;">21</div>
<div class="a" style="left:3px;top:660px;width:25px;height:1px;background:#c9c9c9;"></div>
<div class="t" style="left:8.83px;top:645.84px;font-size:12px;line-height:12px;color:#262626;">22</div>
<div class="a" style="left:3px;top:680px;width:25px;height:1px;background:#c9c9c9;"></div>
<div class="t" style="left:8.83px;top:665.84px;font-size:12px;line-height:12px;color:#262626;">23</div>
<div class="a" style="left:3px;top:700px;width:25px;height:1px;background:#c9c9c9;"></div>
<div class="t" style="left:8.83px;top:685.84px;font-size:12px;line-height:12px;color:#262626;">24</div>
<div class="a" style="left:3px;top:720px;width:25px;height:1px;background:#c9c9c9;"></div>
<div class="t" style="left:8.83px;top:705.84px;font-size:12px;line-height:12px;color:#262626;">25</div>
<div class="a" style="left:3px;top:740px;width:25px;height:1px;background:#c9c9c9;"></div>
<div class="t" style="left:8.83px;top:725.84px;font-size:12px;line-height:12px;color:#262626;">26</div>
<div class="a" style="left:3px;top:760px;width:25px;height:1px;background:#c9c9c9;"></div>
<div class="t" style="left:8.83px;top:745.84px;font-size:12px;line-height:12px;color:#262626;">27</div>
<div class="a" style="left:3px;top:780px;width:25px;height:1px;background:#c9c9c9;"></div>
<div class="t" style="left:8.83px;top:765.84px;font-size:12px;line-height:12px;color:#262626;">28</div>
<div class="a" style="left:3px;top:800px;width:25px;height:1px;background:#c9c9c9;"></div>
<div class="t" style="left:8.83px;top:785.84px;font-size:12px;line-height:12px;color:#262626;">29</div>
<div class="a" style="left:92px;top:221px;width:1px;height:580px;background:#d4d4d4;"></div>
<div class="a" style="left:156px;top:221px;width:1px;height:580px;background:#d4d4d4;"></div>
<div class="a" style="left:220px;top:221px;width:1px;height:580px;background:#d4d4d4;"></div>
<div class="a" style="left:284px;top:221px;width:1px;height:580px;background:#d4d4d4;"></div>
<div class="a" style="left:348px;top:221px;width:1px;height:580px;background:#d4d4d4;"></div>
<div class="a" style="left:412px;top:221px;width:1px;height:580px;background:#d4d4d4;"></div>
<div class="a" style="left:508px;top:221px;width:1px;height:580px;background:#d4d4d4;"></div>
<div class="a" style="left:625px;top:221px;width:1px;height:580px;background:#d4d4d4;"></div>
<div class="a" style="left:673px;top:221px;width:1px;height:580px;background:#d4d4d4;"></div>
<div class="a" style="left:706px;top:221px;width:1px;height:580px;background:#d4d4d4;"></div>
<div class="a" style="left:787px;top:221px;width:1px;height:580px;background:#d4d4d4;"></div>
<div class="a" style="left:29px;top:240px;width:832px;height:1px;background:#d4d4d4;"></div>
<div class="a" style="left:29px;top:260px;width:832px;height:1px;background:#d4d4d4;"></div>
<div class="a" style="left:29px;top:280px;width:832px;height:1px;background:#d4d4d4;"></div>
<div class="a" style="left:29px;top:300px;width:832px;height:1px;background:#d4d4d4;"></div>
<div class="a" style="left:29px;top:320px;width:832px;height:1px;background:#d4d4d4;"></div>
<div class="a" style="left:29px;top:340px;width:832px;height:1px;background:#d4d4d4;"></div>
<div class="a" style="left:29px;top:360px;width:832px;height:1px;background:#d4d4d4;"></div>
<div class="a" style="left:29px;top:380px;width:832px;height:1px;background:#d4d4d4;"></div>
<div class="a" style="left:29px;top:400px;width:832px;height:1px;background:#d4d4d4;"></div>
<div class="a" style="left:29px;top:420px;width:832px;height:1px;background:#d4d4d4;"></div>
<div class="a" style="left:29px;top:440px;width:832px;height:1px;background:#d4d4d4;"></div>
<div class="a" style="left:29px;top:460px;width:832px;height:1px;background:#d4d4d4;"></div>
<div class="a" style="left:29px;top:480px;width:832px;height:1px;background:#d4d4d4;"></div>
<div class="a" style="left:29px;top:500px;width:832px;height:1px;background:#d4d4d4;"></div>
<div class="a" style="left:29px;top:520px;width:832px;height:1px;background:#d4d4d4;"></div>
<div class="a" style="left:29px;top:540px;width:832px;height:1px;background:#d4d4d4;"></div>
<div class="a" style="left:29px;top:560px;width:832px;height:1px;background:#d4d4d4;"></div>
<div class="a" style="left:29px;top:580px;width:832px;height:1px;background:#d4d4d4;"></div>
<div class="a" style="left:29px;top:600px;width:832px;height:1px;background:#d4d4d4;"></div>
<div class="a" style="left:29px;top:620px;width:832px;height:1px;background:#d4d4d4;"></div>
<div class="a" style="left:29px;top:640px;width:832px;height:1px;background:#d4d4d4;"></div>
<div class="a" style="left:29px;top:660px;width:832px;height:1px;background:#d4d4d4;"></div>
<div class="a" style="left:29px;top:680px;width:832px;height:1px;background:#d4d4d4;"></div>
<div class="a" style="left:29px;top:700px;width:832px;height:1px;background:#d4d4d4;"></div>
<div class="a" style="left:29px;top:720px;width:832px;height:1px;background:#d4d4d4;"></div>
<div class="a" style="left:29px;top:740px;width:832px;height:1px;background:#d4d4d4;"></div>
<div class="a" style="left:29px;top:760px;width:832px;height:1px;background:#d4d4d4;"></div>
<div class="a" style="left:29px;top:780px;width:832px;height:1px;background:#d4d4d4;"></div>
<div class="a" style="left:29px;top:800px;width:832px;height:1px;background:#d4d4d4;"></div>
<div class="a" style="left:861px;top:220px;width:1px;height:581px;background:#ababab;"></div>
<div class="a" style="left:3px;top:800px;width:880px;height:1px;background:#ababab;"></div>
<div class="a" style="left:29px;top:221px;width:320px;height:19px;background:#ffff00;"></div>
<div class="t" style="left:31.60px;top:224.99px;font-size:13px;line-height:13px;color:#000;font-weight:bold;letter-spacing:-0.527px;">China</div>
<div class="t" style="left:95.60px;top:224.99px;font-size:13px;line-height:13px;color:#000;font-weight:bold;letter-spacing:-0.611px;">England</div>
<div class="t" style="left:159.60px;top:224.99px;font-size:13px;line-height:13px;color:#000;font-weight:bold;letter-spacing:-1.327px;">USA</div>
<div class="t" style="left:223.60px;top:224.99px;font-size:13px;line-height:13px;color:#000;font-weight:bold;letter-spacing:-0.494px;">Canada</div>
<div class="t" style="left:287.60px;top:224.99px;font-size:13px;line-height:13px;color:#000;font-weight:bold;letter-spacing:-0.484px;">Color</div>
<div class="t" style="left:31.60px;top:244.99px;font-size:13px;line-height:13px;color:#000;letter-spacing:0.301px;">Pink</div>
<div class="t" style="left:95.60px;top:244.99px;font-size:13px;line-height:13px;color:#000;letter-spacing:0.301px;">Pink</div>
<div class="t" style="left:159.60px;top:244.99px;font-size:13px;line-height:13px;color:#000;letter-spacing:0.165px;">Green</div>
<div class="t" style="left:223.60px;top:244.99px;font-size:13px;line-height:13px;color:#000;letter-spacing:0.165px;">Green</div>
<div class="t" style="left:338.37px;top:244.99px;font-size:13px;line-height:13px;color:#000;">0</div>
<div class="t" style="left:31.60px;top:264.99px;font-size:13px;line-height:13px;color:#000;letter-spacing:-0.330px;">Red</div>
<div class="t" style="left:95.60px;top:264.99px;font-size:13px;line-height:13px;color:#000;letter-spacing:0.165px;">Green</div>
<div class="t" style="left:159.60px;top:264.99px;font-size:13px;line-height:13px;color:#000;letter-spacing:-0.330px;">Red</div>
<div class="t" style="left:223.60px;top:264.99px;font-size:13px;line-height:13px;color:#000;letter-spacing:0.301px;">Pink</div>
<div class="t" style="left:338.37px;top:264.99px;font-size:13px;line-height:13px;color:#000;">3</div>
<div class="t" style="left:31.60px;top:284.99px;font-size:13px;line-height:13px;color:#000;letter-spacing:0.323px;">Blue</div>
<div class="t" style="left:95.60px;top:284.99px;font-size:13px;line-height:13px;color:#000;letter-spacing:0.323px;">Blue</div>
<div class="t" style="left:159.60px;top:284.99px;font-size:13px;line-height:13px;color:#000;letter-spacing:0.323px;">Blue</div>
<div class="t" style="left:223.60px;top:284.99px;font-size:13px;line-height:13px;color:#000;letter-spacing:0.323px;">Blue</div>
<div class="t" style="left:338.37px;top:284.99px;font-size:13px;line-height:13px;color:#000;">2</div>
<div class="t" style="left:31.60px;top:304.99px;font-size:13px;line-height:13px;color:#000;letter-spacing:0.165px;">Green</div>
<div class="t" style="left:95.60px;top:304.99px;font-size:13px;line-height:13px;color:#000;letter-spacing:0.165px;">Green</div>
<div class="t" style="left:159.60px;top:304.99px;font-size:13px;line-height:13px;color:#000;letter-spacing:-0.330px;">Red</div>
<div class="t" style="left:223.60px;top:304.99px;font-size:13px;line-height:13px;color:#000;letter-spacing:0.323px;">Blue</div>
<div class="t" style="left:338.37px;top:304.99px;font-size:13px;line-height:13px;color:#000;">1</div>
<div class="t" style="left:31.60px;top:324.99px;font-size:13px;line-height:13px;color:#000;letter-spacing:0.165px;">Green</div>
<div class="t" style="left:95.60px;top:324.99px;font-size:13px;line-height:13px;color:#000;letter-spacing:0.165px;">Green</div>
<div class="t" style="left:159.60px;top:324.99px;font-size:13px;line-height:13px;color:#000;letter-spacing:0.323px;">Blue</div>
<div class="t" style="left:223.60px;top:324.99px;font-size:13px;line-height:13px;color:#000;letter-spacing:0.165px;">Green</div>
<div class="t" style="left:338.37px;top:324.99px;font-size:13px;line-height:13px;color:#000;">3</div>
<div class="t" style="left:31.60px;top:344.99px;font-size:13px;line-height:13px;color:#000;letter-spacing:0.301px;">Pink</div>
<div class="t" style="left:95.60px;top:344.99px;font-size:13px;line-height:13px;color:#000;letter-spacing:0.165px;">Green</div>
<div class="t" style="left:159.60px;top:344.99px;font-size:13px;line-height:13px;color:#000;letter-spacing:0.301px;">Pink</div>
<div class="t" style="left:223.60px;top:344.99px;font-size:13px;line-height:13px;color:#000;letter-spacing:0.323px;">Blue</div>
<div class="t" style="left:338.37px;top:344.99px;font-size:13px;line-height:13px;color:#000;">2</div>
<div class="t" style="left:31.60px;top:364.99px;font-size:13px;line-height:13px;color:#000;letter-spacing:0.323px;">Blue</div>
<div class="t" style="left:95.60px;top:364.99px;font-size:13px;line-height:13px;color:#000;letter-spacing:-0.330px;">Red</div>
<div class="t" style="left:159.60px;top:364.99px;font-size:13px;line-height:13px;color:#000;letter-spacing:0.323px;">Blue</div>
<div class="t" style="left:223.60px;top:364.99px;font-size:13px;line-height:13px;color:#000;letter-spacing:0.165px;">Green</div>
<div class="t" style="left:338.37px;top:364.99px;font-size:13px;line-height:13px;color:#000;">1</div>
<div class="t" style="left:31.60px;top:384.99px;font-size:13px;line-height:13px;color:#000;letter-spacing:0.323px;">Blue</div>
<div class="t" style="left:95.60px;top:384.99px;font-size:13px;line-height:13px;color:#000;letter-spacing:-0.330px;">Red</div>
<div class="t" style="left:159.60px;top:384.99px;font-size:13px;line-height:13px;color:#000;letter-spacing:-0.330px;">Red</div>
<div class="t" style="left:223.60px;top:384.99px;font-size:13px;line-height:13px;color:#000;letter-spacing:0.165px;">Green</div>
<div class="t" style="left:338.37px;top:384.99px;font-size:13px;line-height:13px;color:#000;">1</div>
<div class="t" style="left:31.60px;top:404.99px;font-size:13px;line-height:13px;color:#000;letter-spacing:0.165px;">Green</div>
<div class="t" style="left:95.60px;top:404.99px;font-size:13px;line-height:13px;color:#000;letter-spacing:0.323px;">Blue</div>
<div class="t" style="left:159.60px;top:404.99px;font-size:13px;line-height:13px;color:#000;letter-spacing:0.323px;">Blue</div>
<div class="t" style="left:223.60px;top:404.99px;font-size:13px;line-height:13px;color:#000;letter-spacing:0.301px;">Pink</div>
<div class="t" style="left:338.37px;top:404.99px;font-size:13px;line-height:13px;color:#000;">0</div>
<div class="a" style="left:413px;top:441px;width:212px;height:19px;background:#ddebf7;"></div>
<div class="t" style="left:415.50px;top:444.99px;font-size:13px;line-height:13px;color:#000;letter-spacing:-0.617px;">USA</div>
<div class="t" style="left:511.80px;top:444.99px;font-size:13px;line-height:13px;color:#000;letter-spacing:0.762px;">(Multiple Items</div>
<div class="a" style="left:608px;top:442px;width:17px;height:17px;background:#fff;border:1px solid #a6a6a6;"></div>
<svg class="a" style="left:609px;top:443px;" width="15" height="15" viewBox="0 0 15 15"><path d="M5.5 3 H13 L10.2 6.3 V11 H8.3 V6.3 Z" fill="#555"/><path d="M2 9.5 H5.6 L3.8 11.5 Z" fill="#555"/></svg>
<div class="a" style="left:413px;top:481px;width:375px;height:39px;background:#ddebf7;"></div>
<div class="t" style="left:415.50px;top:484.99px;font-size:13px;line-height:13px;color:#000;font-weight:bold;letter-spacing:-0.299px;">Sum of Color</div>
<div class="t" style="left:511.40px;top:484.99px;font-size:13px;line-height:13px;color:#000;font-weight:bold;letter-spacing:-0.323px;">Column Labels</div>
<div class="a" style="left:608px;top:482px;width:17px;height:17px;background:#fff;border:1px solid #a6a6a6;"></div>
<svg class="a" style="left:613.5px;top:489px;" width="5" height="3" viewBox="0 0 5 3"><path d="M0 0 H5 L2.5 3 Z" fill="#555"/></svg>
<div class="t" style="left:415.50px;top:504.99px;font-size:13px;line-height:13px;color:#000;font-weight:bold;letter-spacing:-0.437px;">Row Labels</div>
<div class="a" style="left:491px;top:502px;width:17px;height:17px;background:#fff;border:1px solid #a6a6a6;"></div>
<svg class="a" style="left:496.5px;top:509px;" width="5" height="3" viewBox="0 0 5 3"><path d="M0 0 H5 L2.5 3 Z" fill="#555"/></svg>
<div class="t" style="left:511.40px;top:504.99px;font-size:13px;line-height:13px;color:#000;font-weight:bold;letter-spacing:-0.357px;">Blue</div>
<div class="t" style="left:628.50px;top:504.99px;font-size:13px;line-height:13px;color:#000;font-weight:bold;letter-spacing:0.080px;">Green</div>
<div class="t" style="left:676.50px;top:504.99px;font-size:13px;line-height:13px;color:#000;font-weight:bold;letter-spacing:-0.881px;">Red</div>
<div class="t" style="left:709.50px;top:504.99px;font-size:13px;line-height:13px;color:#000;font-weight:bold;letter-spacing:-0.077px;">Grand Total</div>
<div class="a" style="left:412px;top:520px;width:376px;height:1px;background:#9bc2e6;"></div>
<div class="a" style="left:413px;top:521px;width:374px;height:59px;background:#fff;"></div>
<div class="t" style="left:415.50px;top:524.99px;font-size:13px;line-height:13px;color:#000;letter-spacing:0.323px;">Blue</div>
<div class="t" style="left:615.27px;top:524.99px;font-size:13px;line-height:13px;color:#000;">2</div>
<div class="t" style="left:663.77px;top:524.99px;font-size:13px;line-height:13px;color:#000;">0</div>
<div class="t" style="left:777.97px;top:524.99px;font-size:13px;line-height:13px;color:#000;">2</div>
<div class="t" style="left:415.50px;top:544.99px;font-size:13px;line-height:13px;color:#000;letter-spacing:0.165px;">Green</div>
<div class="t" style="left:663.77px;top:544.99px;font-size:13px;line-height:13px;color:#000;">4</div>
<div class="t" style="left:696.27px;top:544.99px;font-size:13px;line-height:13px;color:#000;">3</div>
<div class="t" style="left:777.97px;top:544.99px;font-size:13px;line-height:13px;color:#000;">7</div>
<div class="t" style="left:415.50px;top:564.99px;font-size:13px;line-height:13px;color:#000;letter-spacing:-0.330px;">Red</div>
<div class="t" style="left:615.27px;top:564.99px;font-size:13px;line-height:13px;color:#000;">2</div>
<div class="t" style="left:777.97px;top:564.99px;font-size:13px;line-height:13px;color:#000;">2</div>
<div class="a" style="left:412px;top:580px;width:376px;height:1px;background:#9bc2e6;"></div>
<div class="a" style="left:413px;top:581px;width:375px;height:19px;background:#ddebf7;"></div>
<div class="t" style="left:415.50px;top:584.99px;font-size:13px;line-height:13px;color:#000;font-weight:bold;letter-spacing:-0.077px;">Grand Total</div>
<div class="t" style="left:615.27px;top:584.99px;font-size:13px;line-height:13px;color:#000;font-weight:bold;">4</div>
<div class="t" style="left:663.77px;top:584.99px;font-size:13px;line-height:13px;color:#000;font-weight:bold;">4</div>
<div class="t" style="left:696.27px;top:584.99px;font-size:13px;line-height:13px;color:#000;font-weight:bold;">3</div>
<div class="t" style="left:770.75px;top:584.99px;font-size:13px;line-height:13px;color:#000;font-weight:bold;">11</div>
<div class="a" style="left:92px;top:503px;width:192px;height:265px;background:#fff;border:1px solid #6a8bb3;"></div>
<div class="t" style="left:101.60px;top:511.19px;font-size:13px;line-height:13px;color:#000;font-weight:bold;letter-spacing:-1.077px;">USA</div>
<svg class="a" style="left:224px;top:507px;" width="18" height="17" viewBox="0 0 18 17"><path d="M1.5 3 L3.3 5 L6.5 1 M1.5 8 L3.3 10 L6.5 6 M1.5 13 L3.3 15 L6.5 11" fill="none" stroke="#666" stroke-width="1.3"/><path d="M8 3.5 H17 M8 8.5 H17 M8 13.5 H17" stroke="#666" stroke-width="1.1"/></svg>
<svg class="a" style="left:256px;top:508px;" width="18" height="18" viewBox="0 0 18 18"><path d="M1 1 H12.5 L8.2 6.2 V10.8 H6.3 V6.2 Z" fill="#666"/><path d="M6.3 11.2 H9" stroke="#666" stroke-width="1"/><path d="M8 8.5 L15.8 15.8 M15.5 8.5 L8.3 15.8" stroke="#c9584a" stroke-width="1.4"/></svg>
<div class="a" style="left:101px;top:530px;width:174px;height:1px;background:#7190b8;"></div>
<div class="a" style="left:101px;top:535px;width:174px;height:25px;background:#fff;border:1px solid #d0d0d0;border-radius:3px;"></div>
<div class="t" style="left:110.30px;top:540.69px;font-size:13px;line-height:13px;color:#000;letter-spacing:0.215px;">Green</div>
<div class="a" style="left:101px;top:563px;width:174px;height:25px;background:#bdd7ee;border:1px solid #8a8a8a;border-radius:3px;"></div>
<div class="t" style="left:110.30px;top:568.69px;font-size:13px;line-height:13px;color:#000;letter-spacing:-0.380px;">Red</div>
<div class="a" style="left:101px;top:591px;width:174px;height:25px;background:#bdd7ee;border:1px solid #8a8a8a;border-radius:3px;"></div>
<div class="t" style="left:110.30px;top:596.69px;font-size:13px;line-height:13px;color:#000;letter-spacing:0.456px;">Blue</div>
<div class="a" style="left:101px;top:619px;width:174px;height:25px;background:#fff;border:1px solid #d0d0d0;border-radius:3px;"></div>
<div class="t" style="left:110.30px;top:624.69px;font-size:13px;line-height:13px;color:#000;letter-spacing:0.368px;">Pink</div>
<div class="a" style="left:862px;top:201px;width:21px;height:600px;background:#e6e6e6;"></div>
<div class="a" style="left:865px;top:203px;width:15px;height:15px;background:#fff;border:1px solid #ababab;"></div>
<svg class="a" style="left:868px;top:208px;" width="9" height="5" viewBox="0 0 9 5"><path d="M0 5 L4.5 0 L9 5 Z" fill="#666"/></svg>
<div class="a" style="left:865px;top:218px;width:15px;height:550px;background:#fff;border:1px solid #ababab;"></div>
<div class="a" style="left:865px;top:768px;width:15px;height:19px;background:#dadada;"></div>
<div class="a" style="left:865px;top:787px;width:15px;height:15px;background:#fff;border:1px solid #ababab;"></div>
<svg class="a" style="left:868px;top:792px;" width="9" height="5" viewBox="0 0 9 5"><path d="M0 0 L4.5 5 L9 0 Z" fill="#666"/></svg>
<div class="a" style="left:3px;top:801px;width:880px;height:28px;background:#e6e6e6;"></div>
<svg class="a" style="left:30px;top:810px;" width="5" height="9" viewBox="0 0 5 9"><path d="M5 0 L0 4.5 L5 9 Z" fill="#c0c0c0"/></svg>
<svg class="a" style="left:59px;top:810px;" width="5" height="9" viewBox="0 0 5 9"><path d="M0 0 L5 4.5 L0 9 Z" fill="#c0c0c0"/></svg>
<div class="a" style="left:103px;top:801px;width:65px;height:25px;background:#fff;border:1px solid #c6c6c6;border-top:none;border-bottom:none;"></div>
<div class="a" style="left:103px;top:824px;width:65px;height:2px;background:#217346;"></div>
<div class="t" style="left:115.30px;top:809.42px;font-size:12.5px;line-height:12.5px;color:#217346;font-weight:bold;letter-spacing:-0.240px;">Sheet1</div>
<svg class="a" style="left:200px;top:806px;" width="18" height="18" viewBox="0 0 18 18"><circle cx="9" cy="9" r="7.8" fill="none" stroke="#777" stroke-width="1.2"/><path d="M9 4.5 V13.5 M4.5 9 H13.5" stroke="#777" stroke-width="1.6"/></svg>
<div class="a" style="left:531px;top:810px;width:1.5px;height:1.5px;background:#a0a0a0;"></div>
<div class="a" style="left:531px;top:814px;width:1.5px;height:1.5px;background:#a0a0a0;"></div>
<div class="a" style="left:531px;top:818px;width:1.5px;height:1.5px;background:#a0a0a0;"></div>
<div class="a" style="left:548px;top:808px;width:15px;height:15px;background:#fff;border:1px solid #ababab;"></div>
<svg class="a" style="left:552px;top:811px;" width="5" height="9" viewBox="0 0 5 9"><path d="M5 0 L0 4.5 L5 9 Z" fill="#666"/></svg>
<div class="a" style="left:563px;top:808px;width:258px;height:15px;background:#fff;border:1px solid #ababab;"></div>
<div class="a" style="left:821px;top:808px;width:26px;height:15px;background:#dadada;"></div>
<div class="a" style="left:847px;top:808px;width:15px;height:15px;background:#fff;border:1px solid #ababab;"></div>
<svg class="a" style="left:853px;top:811px;" width="5" height="9" viewBox="0 0 5 9"><path d="M0 0 L5 4.5 L0 9 Z" fill="#666"/></svg>
<div class="a" style="left:3px;top:829px;width:880px;height:1px;background:#c6c6c6;"></div>
<div class="a" style="left:3px;top:830px;width:880px;height:21px;background:#f1f1f1;"></div>
<div class="t" style="left:10.80px;top:834.22px;font-size:11.2px;line-height:11.2px;color:#444;letter-spacing:-0.557px;">Ready</div>
<div class="a" style="left:580px;top:829px;width:38px;height:22px;background:#c6c6c6;"></div>
<svg class="a" style="left:592px;top:833px;" width="14" height="13" viewBox="0 0 14 13"><path d="M0.5 0.5 H13.5 V12.5 H0.5 Z M0.5 4.5 H13.5 M0.5 8.5 H13.5 M5 0.5 V12.5 M9 0.5 V12.5" fill="none" stroke="#666"/></svg>
<svg class="a" style="left:630px;top:833px;" width="14" height="13" viewBox="0 0 14 13"><rect x="0.5" y="0.5" width="13" height="12" fill="none" stroke="#666"/><rect x="3.5" y="2.5" width="7" height="8" fill="none" stroke="#666"/><path d="M5 4.5 H9 M5 6.5 H9 M5 8.5 H9" stroke="#666"/></svg>
<svg class="a" style="left:668px;top:833px;" width="14" height="13" viewBox="0 0 14 13"><path d="M0.5 0.5 H13.5 V12.5 H0.5 Z M5.5 0.5 V6.5 H13.5 M8.5 0.5 V6.5" fill="none" stroke="#666"/></svg>
<div class="a" style="left:699px;top:839px;width:6px;height:2px;background:#555;"></div>
<div class="a" style="left:709px;top:839.5px;width:100px;height:1px;background:#a0a0a0;"></div>
<div class="a" style="left:757px;top:833px;width:4px;height:12px;background:#555;"></div>
<svg class="a" style="left:813px;top:835px;" width="9" height="9" viewBox="0 0 9 9"><path d="M4.5 0 V9 M0 4.5 H9" stroke="#555" stroke-width="1.5"/></svg>
<div class="t" style="left:837.50px;top:833.84px;font-size:12px;line-height:12px;color:#444;letter-spacing:-1.562px;">100%</div>
</body></html>
